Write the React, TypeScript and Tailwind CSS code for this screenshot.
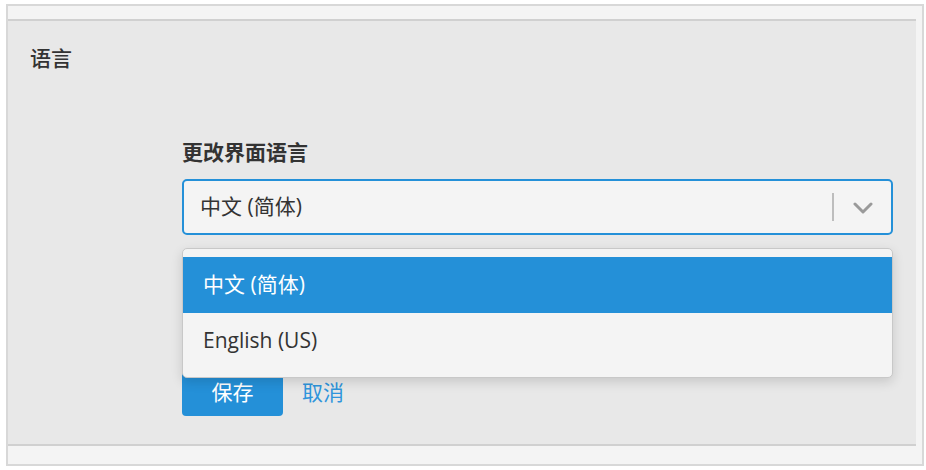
import React from 'react';

const font = { fontFamily: '"Open Sans", "Noto Sans CJK SC", sans-serif' };

function ChevronDown() {
  return (
    <svg width="20" height="12" viewBox="0 0 20 12" fill="none">
      <polyline
        points="2,2 10,10 18,2"
        stroke="#9a9a9a"
        strokeWidth="3"
        strokeLinecap="round"
        strokeLinejoin="round"
      />
    </svg>
  );
}

export default function App() {
  const options = ['中文 (简体)', 'English (US)'];
  const selected = 0;

  return (
    <div className="h-[470px] w-[926px] bg-white pt-[4px] pl-[6px]" style={font}>
      <div className="h-[462px] w-[918px] border-2 border-[#d8d8d8] bg-[#f4f4f4] pt-[13px]">
        <div className="mr-[6px] h-[427px] border-y-2 border-[#d0d0d0] bg-[#e8e8e8]">
          <h2 className="pt-[22px] pl-[22px] text-[21px] leading-[30px] font-medium text-[#333]">
            语言
          </h2>

          <div className="mt-[64px] ml-[174px] w-[711px]">
            <label className="block text-[21px] leading-[30px] font-bold text-[#333]">
              更改界面语言
            </label>

            <div className="relative mt-[12px]">
              <div className="flex h-[56px] items-center rounded-[5px] border-2 border-[#2490d8] bg-[#f4f4f4] pl-[16px]">
                <span className="flex-1 text-[21px] text-[#333]">
                  {options[selected]}
                </span>
                <div className="h-[28px] w-[2px] bg-[#bdbdbd]" />
                <div className="flex w-[57px] items-center justify-center pt-[1px]">
                  <ChevronDown />
                </div>
              </div>

              <div className="absolute top-[69px] left-0 z-10 w-[711px] rounded-[5px] border border-[#c8c8c8] bg-[#f4f4f4] py-[8px] shadow-[0_4px_12px_rgba(0,0,0,0.14)]">
                {options.map((opt, i) => (
                  <div
                    key={opt}
                    className={
                      i === selected
                        ? 'flex h-[56px] items-center bg-[#2490d8] pl-[20px] text-[21px] text-white'
                        : 'flex h-[56px] items-center pl-[20px] text-[21px] text-[#333]'
                    }
                  >
                    {opt}
                  </div>
                ))}
              </div>
            </div>

            <div className="mt-[134px] flex items-center gap-[19px]">
              <button className="h-[47px] w-[101px] rounded-[4px] bg-[#2490d8] text-[21px] text-white">
                保存
              </button>
              <a className="text-[21px] text-[#2f95dc]">取消</a>
            </div>
          </div>
        </div>
      </div>
    </div>
  );
}
